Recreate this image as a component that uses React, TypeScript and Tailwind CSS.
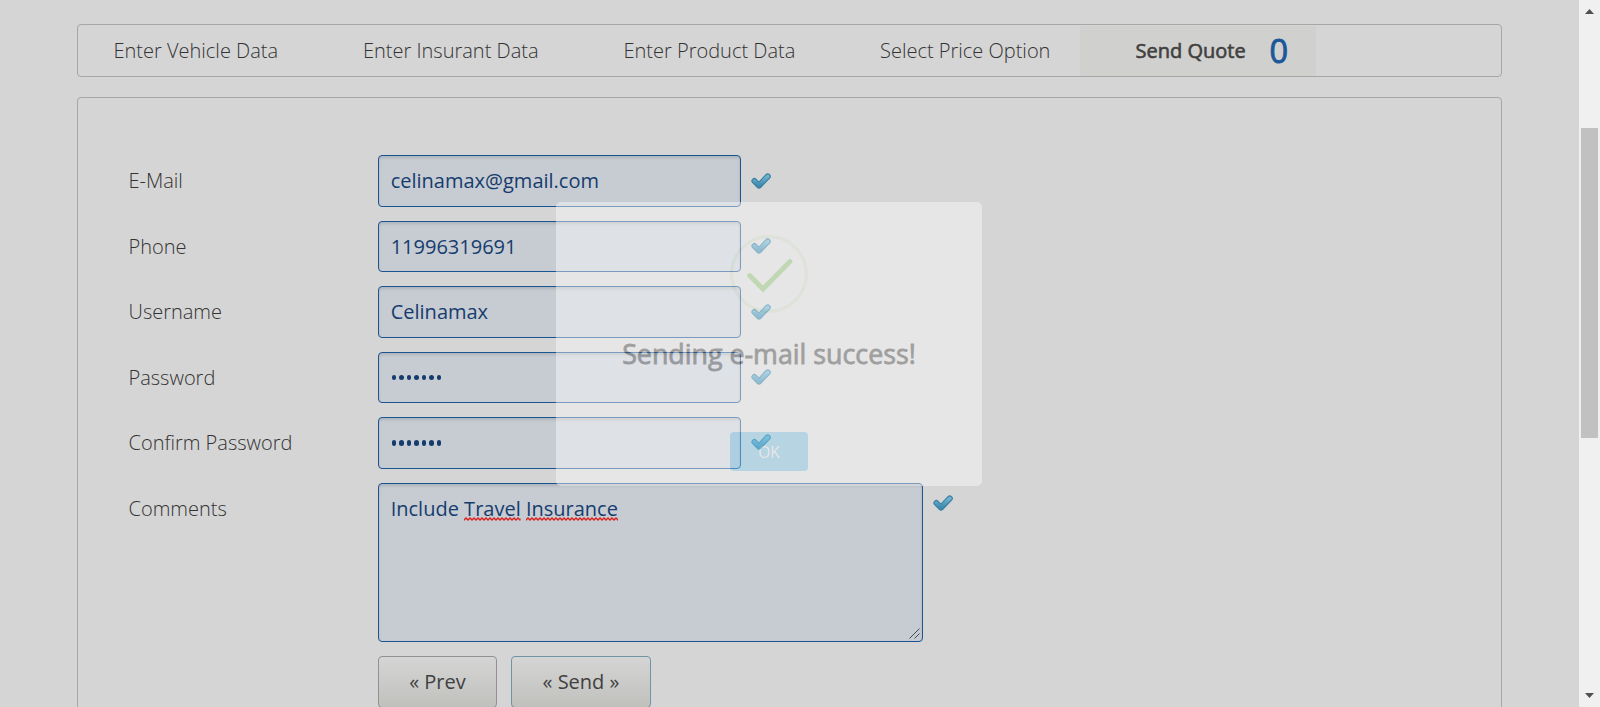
import type { ReactNode } from "react";

const FONT = "font-['Open_Sans','Noto_Sans',sans-serif]";

function Tick({ className = "" }: { className?: string }) {
  return (
    <svg viewBox="0 0 20 16" className={`h-4 w-5 shrink-0 ${className}`}>
      <defs>
        <linearGradient id="tick" x1="0" y1="0" x2="0" y2="1">
          <stop offset="0" stopColor="#6fb2ce" />
          <stop offset="1" stopColor="#3f8bb0" />
        </linearGradient>
      </defs>
      <path d="M3.4 8 L8 12.6 L16.8 3.4" fill="none" stroke="#3a7f9f" strokeWidth="6" strokeLinecap="round" strokeLinejoin="round" />
      <path d="M3.4 8 L8 12.4 L16.8 3.4" fill="none" stroke="url(#tick)" strokeWidth="3.8" strokeLinecap="round" strokeLinejoin="round" />
    </svg>
  );
}

const BOX =
  "box-border rounded-[4px] border border-[#195493] bg-[#c7ccd3] pl-[11.7px] text-[20px] text-[#163c6e] shadow-[inset_0_2px_3px_rgba(0,0,0,0.12)]";

function Row({ label, children }: { label: string; children: ReactNode }) {
  return (
    <div className="flex">
      <div className="w-[249.5px] shrink-0 pt-[12px] text-[20px] leading-[28px] font-light text-[#333]">{label}</div>
      {children}
    </div>
  );
}

function Typo({ children }: { children: string }) {
  return (
    <span className="relative inline-block">
      {children}
      <svg className="absolute top-[33.5px] left-0 h-[4px] w-full">
        <defs>
          <pattern id="squiggle" width="4" height="4" patternUnits="userSpaceOnUse">
            <path d="M-1 2 L0 3 L2 1 L4 3 L5 2" fill="none" stroke="#d8201c" strokeWidth="1.4" />
          </pattern>
        </defs>
        <rect width="100%" height="4" fill="url(#squiggle)" />
      </svg>
    </span>
  );
}

const fields = [
  ["E-Mail", "celinamax@gmail.com"],
  ["Phone", "11996319691"],
  ["Username", "Celinamax"],
];

export default function App() {
  return (
    <div className={`relative flex h-[707px] w-[1600px] overflow-hidden bg-[#d5d5d5] ${FONT}`}>
      <main className="w-[1579px] shrink-0 pt-6 pl-[77px]">
        <nav className="flex h-[53px] w-[1425px] rounded-[4px] border border-[#a6a6a6] text-[20px] leading-[51px] font-light text-[#333]">
          <span className="w-[249px] shrink-0 pl-[35.5px]">Enter Vehicle Data</span>
          <span className="w-[261px] shrink-0 pl-[36px]">Enter Insurant Data</span>
          <span className="w-[256px] shrink-0 pl-[35.5px]">Enter Product Data</span>
          <span className="w-[236px] shrink-0 pl-[36px]">Select Price Option</span>
          <span className="mt-px flex h-[50px] w-[236px] shrink-0 bg-[#d0d0ce] pl-[55.5px] font-normal text-[#404040]">
            <span className="w-[134px] leading-[49px] [-webkit-text-stroke:0.6px_#404040]">Send Quote</span>
            <span className="text-[32.5px] leading-[50px] text-[#1b5799] [-webkit-text-stroke:0.9px_#1b5799]">0</span>
          </span>
        </nav>
        <section className="mt-5 h-[640px] w-[1425px] rounded-[4px] border border-[#a6a6a6] pt-[57.3px] pl-[50.5px]">
          <div className="flex flex-col gap-[14px]">
            {fields.map(([label, value]) => (
              <Row key={label} label={label}>
                <div className={`h-[51.5px] w-[363px] leading-[50px] ${BOX}`}>{value}</div>
                <Tick className="mt-[17.5px] ml-[10px]" />
              </Row>
            ))}
            {["Password", "Confirm Password"].map((label) => (
              <Row key={label} label={label}>
                <div className={`flex h-[51.5px] w-[363px] items-center gap-[2px] ${BOX}`}>
                  {[0, 1, 2, 3, 4, 5, 6].map((i) => (
                    <i key={i} className="ml-px h-[5.5px] w-[4.5px] rounded-full bg-[#163c6e]" />
                  ))}
                </div>
                <Tick className="mt-[17px] ml-[10px]" />
              </Row>
            ))}
            <Row label="Comments">
              <div className={`flex h-[159px] w-[545px] justify-between leading-[50px] ${BOX}`}>
                <span>
                  Include <Typo>Travel</Typo> <Typo>Insurance</Typo>
                </span>
                <svg viewBox="0 0 11 11" className="mr-[2px] mb-[2px] h-[11px] w-[11px] self-end">
                  <path d="M0.5 10.5 L10.5 0.5 M5.5 10.5 L10.5 5.5" stroke="#454a50" strokeWidth="1" />
                </svg>
              </div>
              <Tick className="mt-[12px] ml-[10px]" />
            </Row>
            <div className="flex gap-[14px] pl-[249.5px] text-[20px] leading-[50px] text-[#404040]">
              <div className="h-[52px] w-[119px] rounded-[4px] border border-[#919191] bg-linear-to-b from-[#d5d5d5] to-[#c0c0bd] text-center">« Prev</div>
              <div className="h-[52px] w-[140px] rounded-[4px] border border-[#6f95a5] bg-linear-to-b from-[#d5d5d5] to-[#c0c0bd] text-center">« Send »</div>
            </div>
          </div>
        </section>
      </main>
      <aside className="flex h-full w-[21px] shrink-0 flex-col items-center bg-[#f0f0f0]">
        <svg viewBox="0 0 9 5" className="mt-[9px] h-[5px] w-[9px]"><path d="M0 5 L4.5 0 L9 5 Z" fill="#505050" /></svg>
        <div className="mt-[114px] h-[310px] w-[17px] bg-[#c1c1c1]" />
        <svg viewBox="0 0 9 5" className="mt-auto mb-[9px] h-[5px] w-[9px]"><path d="M0 0 L4.5 5 L9 0 Z" fill="#505050" /></svg>
      </aside>
      <div className="absolute top-[202px] left-[556px] flex h-[284px] w-[426px] flex-col items-center rounded-[5px] bg-white opacity-[0.42]">
        <svg viewBox="0 0 78 78" className="mt-[33px] h-[78px] w-[78px] shrink-0">
          <circle cx="39" cy="39" r="37.4" fill="none" stroke="#e9f5e1" strokeWidth="3.2" />
          <path d="M19.7 40.5 L33 54 L60 26.5" fill="none" stroke="#a5dc86" strokeWidth="4.8" strokeLinecap="round" />
        </svg>
        <h2 className="mt-[23px] text-[26.8px] leading-[36px] font-normal whitespace-nowrap text-[#575757] [-webkit-text-stroke:0.8px_#575757]">
          Sending e-mail success!
        </h2>
        <div className="mt-[60px] flex h-[39px] w-[78px] shrink-0 items-center justify-center rounded-[4px] bg-[#8cd4f5] pt-[2px] text-[15.5px] text-white">OK</div>
      </div>
    </div>
  );
}
